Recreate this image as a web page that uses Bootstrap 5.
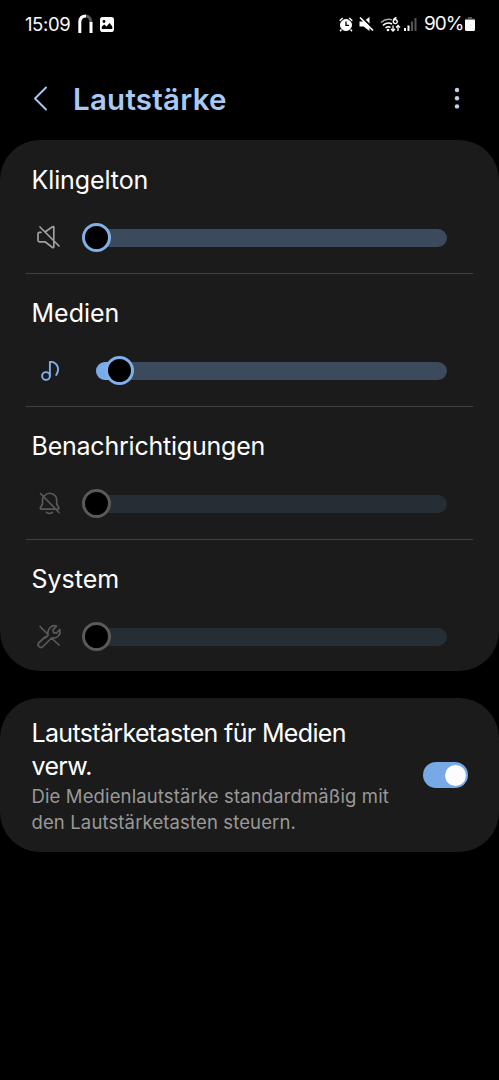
<!DOCTYPE html>
<html lang="de" data-bs-theme="dark">
<head>
<meta charset="utf-8">
<meta name="viewport" content="width=device-width, initial-scale=1">
<title>Lautstärke</title>
<link rel="stylesheet" href="https://cdn.jsdelivr.net/npm/bootstrap@5.3.0/dist/css/bootstrap.min.css">
<style>
body{background:#000;font-family:Inter,Roboto,"Liberation Sans",sans-serif;color:#fafafa;overflow:hidden}
svg{display:block;flex:none}
.statusbar{height:48px;padding:0 24px 0 25px;font-size:18.5px;line-height:48px}
.clock{letter-spacing:-.4px;width:53px}
.batt{letter-spacing:-.95px;font-size:19px;width:41px}
.appbar{height:92px;padding:8px 31px 0 31px}
.appbar h1{font-size:29.5px;font-weight:600;color:#a9c9f3;letter-spacing:.25px;line-height:40px}
.panel{background:#1b1b1b;border:0;border-radius:40px}
.vol{flex:none;height:133px;padding:24px 25px 0 32px}
.vol h2,.opt h2{font-size:25px;font-weight:400;line-height:33px;margin:0 0 0 -.5px;white-space:nowrap}
.vol-row{height:28px;margin-top:26.5px}
.rule{flex:none;height:1px;margin:0 26px -1px;background:#414141}
.track{height:18px;width:351px;border-radius:9px;background:#3b4a5c;margin-left:28px}
.fill{height:18px;border-radius:9px;background:#7aabe6}
.thumb{width:29px;height:29px;border:3px solid #80b0ea;border-radius:50%;background:#000;top:-5.5px;margin-left:-14.5px}
.off .track{background:#262e35}
.off .thumb{border-color:#5a5a5a}
.off svg{color:#5a5a5a}
.opt{height:154px;margin-top:27px;padding:19px 31px 0 32px}
.opt h2{letter-spacing:-.66px}
.opt p{font-size:18.5px;line-height:26px;color:#999;margin:0 0 0 -.5px;letter-spacing:.13px;white-space:nowrap}
.toggle{width:45px;height:26px;border-radius:13px;background:#76a9e6;padding:2px;margin-top:45px}
.toggle i{width:21px;height:21px;border-radius:50%;background:#fcfcfc}
</style>
<script src="https://cdn.jsdelivr.net/npm/bootstrap@5.3.0/dist/js/bootstrap.bundle.min.js"></script>
</head>
<body>
<div class="statusbar d-flex align-items-center">
  <span class="clock">15:09</span>
  <svg width="15" height="20" viewBox="0 0 15 20" fill="none" stroke-width="3"><path d="M7 2C12 2 13 5 13 9" stroke="#555"/><path d="M1.800 19V8Q2 2 8 2M13 8v11" stroke="#fff"/></svg>
  <svg style="margin-left:7px" width="14" height="15" viewBox="0 0 14 15"><rect width="14" height="15" rx="2.800" fill="#fff"/><path d="M1.800 12V9.500l2.500-2L6.500 9.500l3-3.500L12.300 9.500V12z" fill="#000"/><circle cx="4" cy="4.500" r="1.400" fill="#000"/></svg>
  <svg class="ms-auto" width="14" height="15" viewBox="0 0 14 15" fill="none" stroke="#fff"><circle cx="7" cy="8" r="5.500" fill="#fff"/><path d="M7 4.500V8.300h3" stroke="#000" stroke-width="1.300"/><path d="M.7 3.800 3.700 1M13.300 3.800 10.300 1M2.500 12.500 1 14.200M11.500 12.500l1.500 1.700" stroke-width="1.500"/></svg>
  <svg width="15" height="16" viewBox="0 0 15 16" style="margin-left:6px"><path d="M.5 5.500h4L10.500 1v14L4.500 10.500h-4z" fill="#fff"/><path d="M2.300.8 15 13.500" stroke="#000" stroke-width="2"/><path d="M1 1.500 14 14.500" stroke="#fff" stroke-width="1.700"/></svg>
  <svg width="21" height="17" viewBox="0 0 21 17" fill="none" stroke="#fff" style="margin-left:6px"><path d="M1 6.500Q6 2 12 3.800" stroke-width="1.400" stroke="#aaa"/><path d="M3 9.300Q7.500 5.500 12 8M5.500 12Q8 9.800 10.500 11.500" stroke-width="1.600"/><circle cx="8" cy="14" r="1.300" fill="#fff" stroke="none"/><path d="M16.500 1.500Q13.300 2.500 13.300 5.500a2 2 0 1 0 1-1.600" stroke-width="1.400"/><path d="M13 9.500V15m-2-2 2 2 2-2M18 15V9.500m-2 2 2-2 2 2" stroke-width="1.300"/></svg>
  <svg width="13" height="14" viewBox="0 0 13 14" style="margin-left:3px"><path d="M0 11h2v3H0zM3.500 8.500h2V14h-2z" fill="#fff"/><path d="M7 4.500h2V14H7zM10.500 1h2v13h-2z" fill="#555"/></svg>
  <span class="batt" style="margin-left:7px">90%</span>
  <svg width="10" height="14" viewBox="0 0 10 14"><path d="M3 0h4v1.500h1.500A1.500 1.500 0 0 1 10 3H0a1.500 1.500 0 0 1 1.500-1.500H3z" fill="#555"/><path d="M0 2.800h10V12.500a1.500 1.500 0 0 1-1.500 1.500h-7A1.500 1.500 0 0 1 0 12.500z" fill="#fff"/></svg>
</div>
<header class="appbar d-flex align-items-start">
  <svg width="20" height="26" viewBox="0 0 20 26" fill="none" stroke="#a9c9f3" stroke-width="1.900" stroke-linecap="round" stroke-linejoin="round" style="margin-top:30px"><path d="M15 1.500 4 12.500l11 11"/></svg>
  <h1 style="margin:23px 0 0 22px">Lautstärke</h1>
  <svg class="ms-auto" width="22" height="24" viewBox="0 0 22 24" fill="#bdd3ee" style="margin-top:31px"><circle cx="11" cy="3" r="2.200"/><circle cx="11" cy="11.200" r="2.200"/><circle cx="11" cy="19.400" r="2.200"/></svg>
</header>
<main>
  <section class="card panel" style="height:531px">
    <div class="vol"><h2 style="letter-spacing:-.1px">Klingelton</h2>
      <div class="vol-row d-flex align-items-center">
        <svg width="36" height="28" viewBox="0 0 36 28" fill="none" stroke="#a0a0a0" stroke-width="1.700" stroke-linejoin="round" stroke-linecap="round"><path d="M9 8.300H7.500A1.500 1.500 0 0 0 6 9.800v6.500a1.500 1.500 0 0 0 1.500 1.500H13l7.500 5.700a.8.800 0 0 0 1.300-.7V3.400a.8.800 0 0 0-1.300-.7L13 8M8 3l19 19"/></svg>
        <div class="track position-relative"><div class="thumb position-absolute" style="left:0%"></div></div>
      </div></div>
    <div class="rule"></div>
    <div class="vol"><h2>Medien</h2>
      <div class="vol-row d-flex align-items-center">
        <svg width="36" height="28" viewBox="0 0 36 28" fill="none" stroke="#80b0ea" stroke-width="1.900" stroke-linecap="round" stroke-linejoin="round"><circle cx="14" cy="19" r="3.900"/><path d="M17.900 19V5C23.500 4 29 10.500 24.200 18"/></svg>
        <div class="track position-relative"><div class="fill" style="width:7%"></div><div class="thumb position-absolute" style="left:6.800%"></div></div>
      </div></div>
    <div class="rule"></div>
    <div class="vol off"><h2 style="letter-spacing:-.22px">Benachrichtigungen</h2>
      <div class="vol-row d-flex align-items-center">
        <svg width="36" height="28" viewBox="0 0 36 28" fill="none" stroke="currentColor" stroke-width="1.700" stroke-linecap="round" stroke-linejoin="round"><path d="M12.500 5.500C17 1 24.500 4 24.700 10v4l2 3.500q.6 1.500-1.200 1.700M23 19.200H9.500Q7.800 19 8.600 17.500L10.500 14v-4q0-1.500.7-2.800M8.500 3.500l18.500 19M14.500 22.300q3 2.300 6 0"/></svg>
        <div class="track position-relative"><div class="thumb position-absolute" style="left:0%"></div></div>
      </div></div>
    <div class="rule"></div>
    <div class="vol off"><h2>System</h2>
      <div class="vol-row d-flex align-items-center">
        <svg width="36" height="28" viewBox="0 0 36 28" fill="none" stroke="currentColor" stroke-width="1.700" stroke-linecap="round" stroke-linejoin="round"><path d="M16 12.500C15 6 19.500 1.500 24.500 3L21 6.800l.5 2.900 2.900.5 3.300-3.700C29.500 11.500 25 16 19.500 15L11 23.500a2.700 2.700 0 0 1-4-4l6-5.500M16 12.500 13 15M8 3.500l8 8M19.500 15l7.500 7"/></svg>
        <div class="track position-relative"><div class="thumb position-absolute" style="left:0%"></div></div>
      </div></div>
  </section>
  <section class="card panel opt d-flex flex-row justify-content-between">
    <div><h2>Lautstärketasten für Medien<br>verw.</h2>
    <p>Die Medienlautstärke standardmäßig mit<br>den Lautstärketasten steuern.</p></div>
    <div class="toggle d-flex justify-content-end align-items-center"><i></i></div>
  </section>
</main>
</body>
</html>
